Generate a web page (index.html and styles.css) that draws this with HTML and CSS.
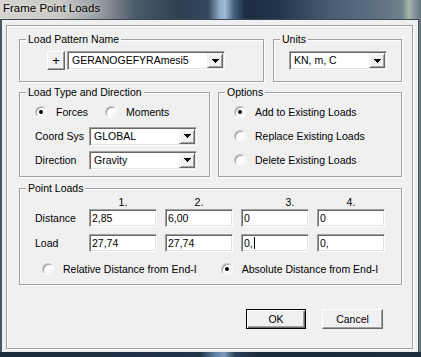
FILE: index.html
```html
<!DOCTYPE html>
<html lang="en">
<head>
    <meta charset="UTF-8">
    <title>Frame Point Loads</title>
    <link rel="stylesheet" href="styles.css">
</head>
<body>
    <div class="window">
        <div class="titlebar">Frame Point Loads</div>
        <div class="frame">
            <div class="client">
                <div class="row">
                    <fieldset class="group pattern">
                        <legend>Load Pattern Name</legend>
                        <div class="inline">
                            <button class="btn plus">+</button>
                            <div class="combo pattern-combo">
                                <span class="value">GERANOGEFYRAmesi5</span>
                                <span class="drop"><svg width="7" height="4" viewBox="0 0 7 4"><path d="M0 0h7v1H0zM1 1h5v1H1zM2 2h3v1H2zM3 3h1v1H3z" fill="#000"/></svg></span>
                            </div>
                        </div>
                    </fieldset>
                    <fieldset class="group units">
                        <legend>Units</legend>
                        <div class="inline">
                            <div class="combo units-combo">
                                <span class="value">KN, m, C</span>
                                <span class="drop"><svg width="7" height="4" viewBox="0 0 7 4"><path d="M0 0h7v1H0zM1 1h5v1H1zM2 2h3v1H2zM3 3h1v1H3z" fill="#000"/></svg></span>
                            </div>
                        </div>
                    </fieldset>
                </div>

                <div class="row second">
                    <fieldset class="group loadtype">
                        <legend>Load Type and Direction</legend>
                        <div class="stack">
                            <div class="line">
                                <span class="opt"><span class="radio on"></span>Forces</span>
                                <span class="opt moments"><span class="radio"></span>Moments</span>
                            </div>
                            <div class="line">
                                <span class="label">Coord Sys</span>
                                <div class="combo dir-combo">
                                    <span class="value">GLOBAL</span>
                                    <span class="drop"><svg width="7" height="4" viewBox="0 0 7 4"><path d="M0 0h7v1H0zM1 1h5v1H1zM2 2h3v1H2zM3 3h1v1H3z" fill="#000"/></svg></span>
                                </div>
                            </div>
                            <div class="line">
                                <span class="label">Direction</span>
                                <div class="combo dir-combo">
                                    <span class="value">Gravity</span>
                                    <span class="drop"><svg width="7" height="4" viewBox="0 0 7 4"><path d="M0 0h7v1H0zM1 1h5v1H1zM2 2h3v1H2zM3 3h1v1H3z" fill="#000"/></svg></span>
                                </div>
                            </div>
                        </div>
                    </fieldset>
                    <fieldset class="group options">
                        <legend>Options</legend>
                        <div class="stack">
                            <div class="line"><span class="opt"><span class="radio on"></span>Add to Existing Loads</span></div>
                            <div class="line"><span class="opt"><span class="radio"></span>Replace Existing Loads</span></div>
                            <div class="line"><span class="opt"><span class="radio"></span>Delete Existing Loads</span></div>
                        </div>
                    </fieldset>
                </div>

                <fieldset class="group points">
                    <legend>Point Loads</legend>
                    <div class="pl">
                        <div class="pl-grid pl-head">
                            <span></span>
                            <span>1.</span>
                            <span>2.</span>
                            <span class="off">3.</span>
                            <span>4.</span>
                        </div>
                        <div class="pl-grid pl-row">
                            <span class="label">Distance</span>
                            <span class="field">2,85</span>
                            <span class="field">6,00</span>
                            <span class="field">0</span>
                            <span class="field">0</span>
                        </div>
                        <div class="pl-grid pl-row">
                            <span class="label">Load</span>
                            <span class="field">27,74</span>
                            <span class="field">27,74</span>
                            <span class="field">0,<span class="caret"></span></span>
                            <span class="field">0,</span>
                        </div>
                        <div class="pl-opts">
                            <span class="opt"><span class="radio"></span>Relative Distance from End-I</span>
                            <span class="opt"><span class="radio on"></span>Absolute Distance from End-I</span>
                        </div>
                    </div>
                </fieldset>

                <div class="actions">
                    <button class="btn default ok">OK</button>
                    <button class="btn cancel">Cancel</button>
                </div>
            </div>
        </div>
        <div class="desk"></div>
    </div>
</body>
</html>
```

FILE: styles.css
```css
body {
    margin: 0;
    width: 421px;
    height: 357px;
    overflow: hidden;
    background: #66767f;
    font-family: "Liberation Sans", Arial, sans-serif;
    font-size: 10.5px;
    color: #000;
}

.window {
    display: flex;
    flex-direction: column;
    height: 357px;
}

.titlebar {
    height: 19px;
    line-height: 17px;
    padding-left: 3px;
    font-size: 11.5px;
    text-shadow: 0 0 4px rgba(255, 255, 255, 0.7);
    background: linear-gradient(90deg, #d6d5cf 0px, #c9c9c4 60px, #8d949a 105px, #4c5a69 135px,
        #2f3f52 180px, #34465c 208px, #90aecb 220px, #9fbbd6 225px, #44617f 234px,
        #1c2d42 245px, #23354a 280px, #4a5c70 330px, #5f7183 380px, #71818d 402px,
        #a9b8a6 409px, #8797a0 414px, #66767f 421px);
}

.frame {
    width: 419px;
    box-sizing: border-box;
    border-left: 2px solid #4a5560;
    border-top: 1px solid #3a4652;
    border-right: 1px solid #4a5560;
    padding: 5px 5px 3px 4px;
    background: #f0f0f0;
}

.client {
    height: 324px;
    box-sizing: border-box;
    border: 1px solid #a0a0a0;
    box-shadow: inset 1px 1px #fff, 1px 1px #fff;
    padding: 7px 10px 0 12px;
}

.desk {
    height: 5px;
    background: linear-gradient(90deg, #1d2b3b 0px, #22344a 200px, #5f7fa0 215px, #7d9cbc 224px,
        #2a4058 235px, #1a2838 260px, #1e2e40 421px);
}

/* group boxes */
.group {
    margin: 0;
    padding: 0;
    min-width: 0;
    box-sizing: border-box;
    border: 1px solid #a0a0a0;
    box-shadow: inset 1px 1px #fff, 1px 1px #fff;
}

.group legend {
    margin-left: 6px;
    padding: 0 2px;
    line-height: 12px;
    background: #f0f0f0;
}

.row {
    display: flex;
    gap: 9px;
}

.row.second {
    gap: 8px;
    margin-top: 4px;
}

.pattern { width: 245px; }
.units { width: 129px; }
.loadtype { width: 191px; }
.options { width: 184px; }

.points {
    width: 383px;
    margin-top: 5px;
}

.inline {
    display: flex;
    gap: 2px;
    padding: 6px 0 11px 27px;
}

.units .inline {
    padding-left: 15px;
}

.stack {
    padding: 2px 0 4px 15px;
}

.line {
    display: flex;
    align-items: center;
    height: 24px;
}

.label {
    width: 54px;
    flex: none;
}

/* controls */
.btn {
    box-sizing: border-box;
    padding: 0;
    background: #f0f0f0;
    border: 1px solid;
    border-color: #fff #696969 #696969 #fff;
    box-shadow: inset -1px -1px #a0a0a0;
    font: inherit;
    color: #000;
}

.plus {
    width: 18px;
    height: 19px;
    font-size: 13px;
    line-height: 15px;
}

.combo {
    display: flex;
    box-sizing: border-box;
    height: 19px;
    padding: 1px;
    background: #fff;
    border: 1px solid;
    border-color: #a0a0a0 #fff #fff #a0a0a0;
    box-shadow: inset 1px 1px #696969, inset -1px -1px #e3e3e3;
}

.pattern-combo { width: 158px; }
.units-combo { width: 98px; }
.dir-combo { width: 108px; }

.combo .value {
    flex: 1;
    padding-left: 3px;
    line-height: 15px;
    white-space: nowrap;
    overflow: hidden;
}

.drop {
    display: flex;
    align-items: center;
    justify-content: center;
    width: 16px;
    box-sizing: border-box;
    background: #f0f0f0;
    border: 1px solid;
    border-color: #f0f0f0 #696969 #696969 #f0f0f0;
    box-shadow: inset 1px 1px #fff, inset -1px -1px #a0a0a0;
}

.field {
    display: block;
    box-sizing: border-box;
    height: 18px;
    padding: 0 2px;
    line-height: 16px;
    background: #fff;
    border: 1px solid;
    border-color: #a0a0a0 #fff #fff #a0a0a0;
    box-shadow: inset 1px 1px #696969, inset -1px -1px #e3e3e3;
    white-space: nowrap;
}

.caret {
    display: inline-block;
    width: 1px;
    height: 12px;
    margin-left: 1px;
    vertical-align: -2px;
    background: #000;
}

.opt {
    display: flex;
    align-items: center;
    gap: 9px;
}

.moments {
    margin-left: 17px;
}

.radio {
    position: relative;
    flex: none;
    width: 12px;
    height: 12px;
    box-sizing: border-box;
    border-radius: 50%;
    background: #fff;
    border: 1px solid;
    border-color: #c4c4c4 #fff #fff #c4c4c4;
    box-shadow: inset 1px 1px #9a9a9a, inset -1px -1px #ececec;
}

.radio.on::after {
    content: "";
    position: absolute;
    left: 3px;
    top: 3px;
    width: 4px;
    height: 4px;
    border-radius: 50%;
    background: #000;
}

/* point loads table */
.pl {
    padding: 1px 0 5px 15px;
}

.pl-grid {
    display: grid;
    grid-template-columns: 46px repeat(4, 68px);
    column-gap: 8px;
    align-items: center;
}

.pl-head {
    height: 14px;
    line-height: 14px;
    text-align: center;
}

.pl-head .off {
    padding-left: 30px;
}

.pl-row + .pl-row {
    margin-top: 7px;
}

.pl-opts {
    display: flex;
    align-items: center;
    gap: 24px;
    height: 20px;
    margin-top: 7px;
    padding-left: 7px;
}

/* dialog buttons */
.actions {
    display: flex;
    justify-content: flex-end;
    gap: 16px;
    margin-top: 24px;
    padding-right: 19px;
}

.actions .btn {
    height: 20px;
}

.ok { width: 60px; }
.cancel { width: 61px; }

.btn.default {
    border-color: #000;
    box-shadow: inset 1px 1px #fff, inset -1px -1px #696969, inset -2px -2px #a0a0a0;
}
```
